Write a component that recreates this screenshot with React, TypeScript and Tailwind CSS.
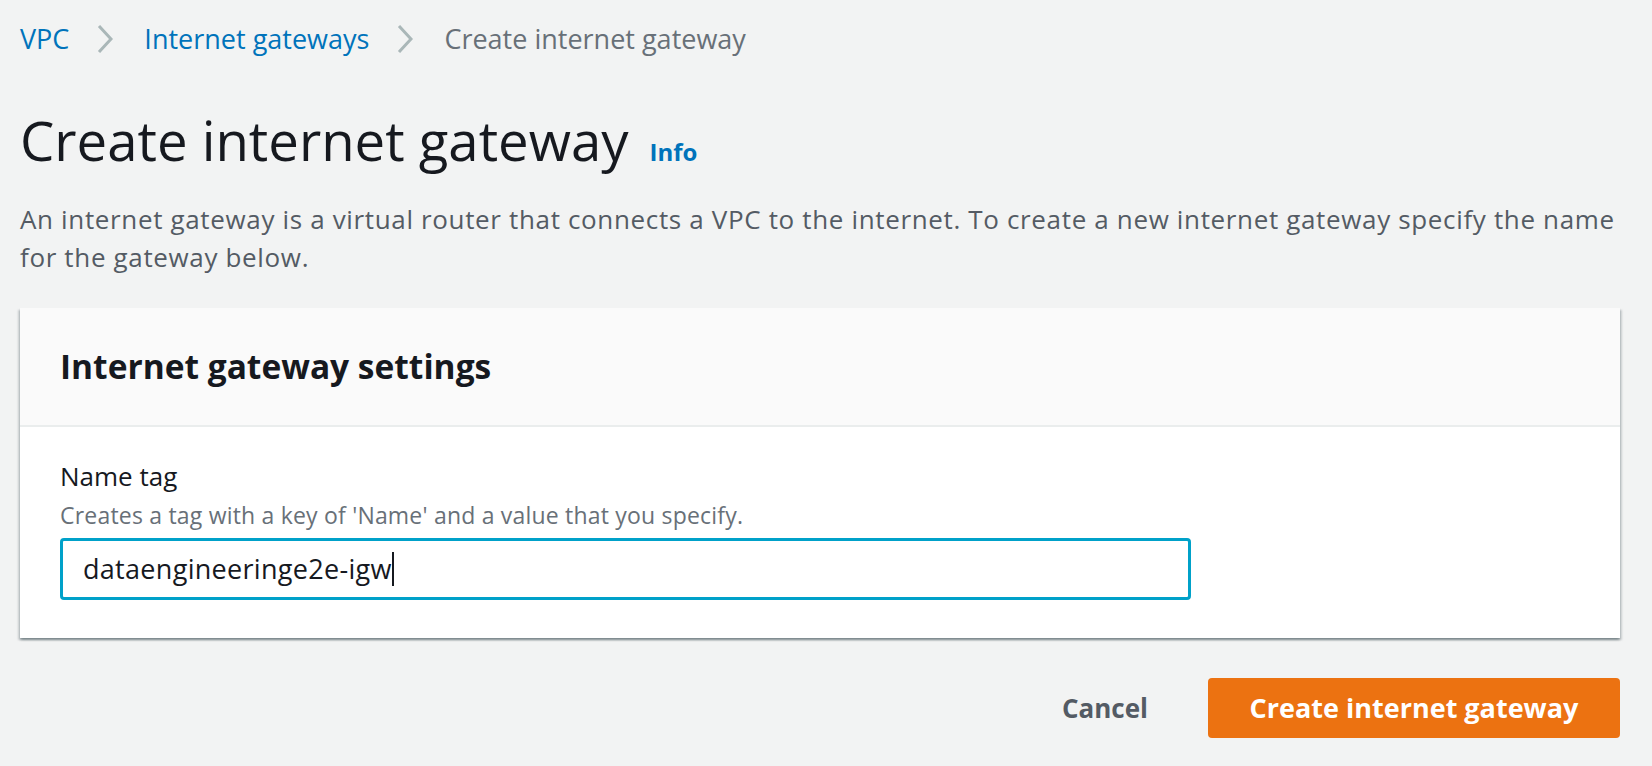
const Chevron = () => (
  <svg width="16" height="28" viewBox="0 0 16 28" className="ml-[28px] mr-[31px]">
    <polyline points="2,1 14,14 2,27" fill="none" stroke="#aab7b8" strokeWidth="3" />
  </svg>
);

export default function App() {
  return (
    <div className="min-h-screen bg-[#f2f3f3] pl-[20px] pr-[32px] font-['Open_Sans',sans-serif] text-[#16191f]">
      {/* Breadcrumb */}
      <nav className="flex items-center pt-[24px] text-[27px] leading-[30px]">
        <a className="text-[#0073bb]">VPC</a>
        <Chevron />
        <a className="text-[#0073bb]">Internet gateways</a>
        <Chevron />
        <span className="text-[#687078]">Create internet gateway</span>
      </nav>

      {/* Header */}
      <div className="mt-[54px] flex items-baseline">
        <h1 className="text-[54.5px] leading-[64px] font-normal">Create internet gateway</h1>
        <a className="ml-[21px] text-[24px] font-bold text-[#0073bb]">Info</a>
      </div>
      <p className="mt-[28px] text-[26px] leading-[38px] tracking-[0.65px] text-[#545b64]">
        An internet gateway is a virtual router that connects a VPC to the internet. To create a new internet gateway specify the name
        <br />
        for the gateway below.
      </p>

      {/* Settings card */}
      <div className="mt-[32px] bg-white shadow-[0_2px_2px_0_rgba(0,28,36,0.3),2px_2px_2px_0_rgba(0,28,36,0.15),-2px_2px_2px_0_rgba(0,28,36,0.15)]">
        <div className="bg-[#fafafa] border-b-2 border-[#eaeded] h-[119px] flex items-center px-[40px]">
          <h2 className="text-[33.5px] font-bold">Internet gateway settings</h2>
        </div>
        <div className="px-[40px] pt-[30px] pb-[38px]">
          <div className="text-[26px] leading-[38px]">Name tag</div>
          <div className="mt-[4px] text-[23px] leading-[32px] tracking-[0.2px] text-[#687078]">
            Creates a tag with a key of 'Name' and a value that you specify.
          </div>
          <div className="mt-[7px] w-[1131px] h-[62px] border-[3px] border-[#00a1c9] rounded-[4px] flex items-center px-[20px] text-[27px] tracking-[0.3px]">
            <span>dataengineeringe2e-igw</span>
            <span className="w-[2px] h-[34px] bg-[#16191f]" />
          </div>
        </div>
      </div>

      {/* Actions */}
      <div className="mt-[40px] flex items-center justify-end gap-[60px]">
        <button className="text-[26px] font-bold text-[#545b64]">Cancel</button>
        <button className="w-[412px] h-[60px] rounded-[4px] bg-[#ec7211] text-[27px] font-bold text-white">
          Create internet gateway
        </button>
      </div>
    </div>
  );
}
